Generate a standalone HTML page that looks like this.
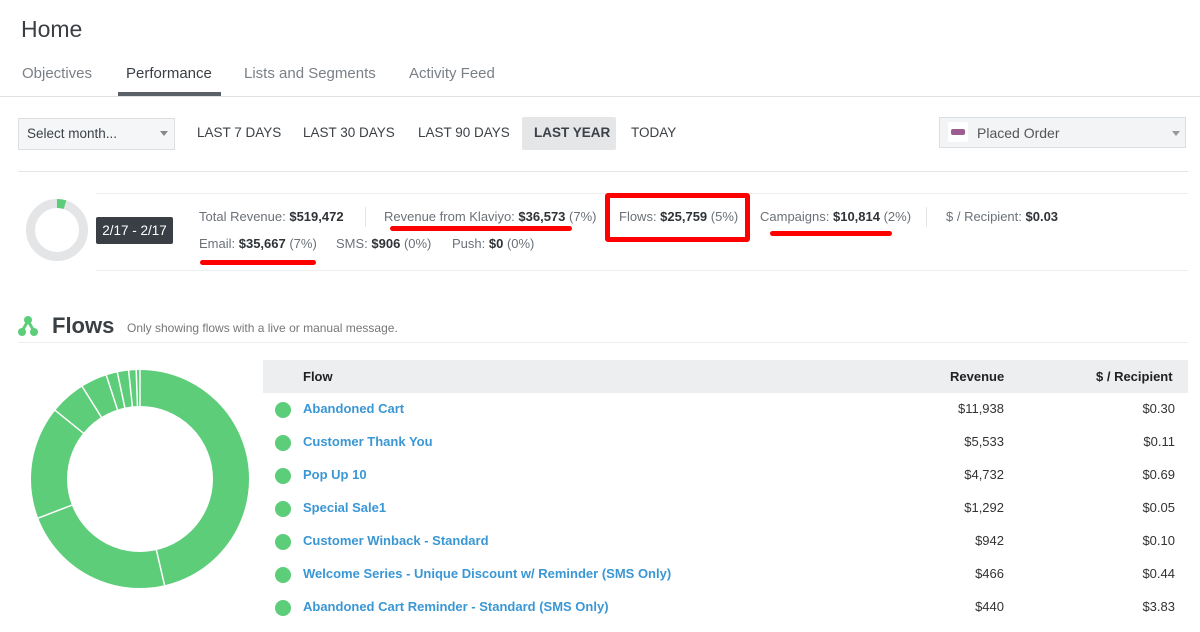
<!DOCTYPE html>
<html><head><meta charset="utf-8"><style>
*{margin:0;padding:0;box-sizing:border-box}
body{width:1200px;height:632px;overflow:hidden;background:#fff;font-family:"Liberation Sans",sans-serif;color:#333;position:relative}
.a{position:absolute;white-space:nowrap}
.tab{font-size:15px;color:#7a8087;top:65px}
.btn{font-size:13.5px;color:#3c4147;top:125px}
.m{font-size:13px;color:#6b7178}
.m b{color:#2f3337}
.red{position:absolute;background:#f00;border-radius:3px;height:5px}
.row{position:absolute;left:263px;width:925px;height:33px}
.row .d{position:absolute;left:12px;top:9px;width:16px;height:16px;border-radius:50%;background:#5ccd78}
.row .n{position:absolute;left:40px;top:8px;font-size:13px;font-weight:bold;color:#3a97d4}
.row .r{position:absolute;right:184px;top:8px;font-size:13px;color:#333}
.row .p{position:absolute;right:13px;top:8px;font-size:13px;color:#333}
</style></head><body>
<div class="a" style="left:21px;top:16px;font-size:23px;color:#3a3f44">Home</div>
<div class="a tab" style="left:22px">Objectives</div>
<div class="a tab" style="left:126px;color:#3a3f44">Performance</div>
<div class="a tab" style="left:244px">Lists and Segments</div>
<div class="a tab" style="left:409px">Activity Feed</div>
<div class="a" style="left:0;top:96px;width:1200px;height:1px;background:#dfe1e3"></div>
<div class="a" style="left:118px;top:92px;width:103px;height:4px;background:#5a6169"></div>

<div class="a" style="left:18px;top:118px;width:157px;height:32px;border:1px solid #dcdfe2;background:#f5f6f7"></div>
<div class="a" style="left:27px;top:126px;font-size:13.5px;color:#3c4147">Select month...</div>
<div class="a" style="left:160px;top:131px;border:4px solid transparent;border-top:5px solid #888"></div>
<div class="a btn" style="left:197px">LAST 7 DAYS</div>
<div class="a btn" style="left:303px">LAST 30 DAYS</div>
<div class="a btn" style="left:418px">LAST 90 DAYS</div>
<div class="a" style="left:522px;top:117px;width:94px;height:33px;background:#e4e6e8;border-radius:2px"></div>
<div class="a btn" style="left:534px;font-weight:bold;color:#3c4147">LAST YEAR</div>
<div class="a btn" style="left:631px">TODAY</div>

<div class="a" style="left:939px;top:117px;width:247px;height:31px;border:1px solid #dcdfe2;background:#f2f4f5"></div>
<div class="a" style="left:948px;top:122px;width:20px;height:20px;background:#fff;border-radius:2px"></div>
<div class="a" style="left:951px;top:129px;width:14px;height:6px;background:#9b5c8f;border-radius:2px"></div>
<div class="a" style="left:977px;top:125px;font-size:14px;color:#555">Placed Order</div>
<div class="a" style="left:1172px;top:131px;border:4px solid transparent;border-top:5px solid #999"></div>

<div class="a" style="left:18px;top:171px;width:1170px;height:1px;background:#e3e5e7"></div>
<div class="a" style="left:96px;top:193px;width:1092px;height:1px;background:#eceef0"></div>
<div class="a" style="left:96px;top:270px;width:1092px;height:1px;background:#eceef0"></div>

<svg class="a" style="left:24px;top:197px" width="66" height="66" viewBox="0 0 66 66">
<circle cx="33" cy="33" r="26.5" fill="none" stroke="#e3e5e7" stroke-width="9"/>
<path d="M33 6.5 A26.5 26.5 0 0 1 41 7.7" fill="none" stroke="#5ccd78" stroke-width="9"/>
</svg>
<div class="a" style="left:96px;top:217px;width:77px;height:27px;background:#3a3f45;border-radius:2px;color:#fff;font-size:13.5px;text-align:center;line-height:27px">2/17 - 2/17</div>

<div class="a m" style="left:199px;top:209px">Total Revenue: <b>$519,472</b></div>
<div class="a" style="left:365px;top:207px;width:1px;height:20px;background:#e3e5e7"></div>
<div class="a m" style="left:384px;top:209px">Revenue from Klaviyo: <b>$36,573</b> (7%)</div>
<div class="a m" style="left:619px;top:209px">Flows: <b>$25,759</b> (5%)</div>
<div class="a m" style="left:760px;top:209px">Campaigns: <b>$10,814</b> (2%)</div>
<div class="a" style="left:926px;top:207px;width:1px;height:20px;background:#e3e5e7"></div>
<div class="a m" style="left:946px;top:209px">$ / Recipient: <b>$0.03</b></div>
<div class="a m" style="left:199px;top:236px">Email: <b>$35,667</b> (7%)</div>
<div class="a m" style="left:336px;top:236px">SMS: <b>$906</b> (0%)</div>
<div class="a m" style="left:452px;top:236px">Push: <b>$0</b> (0%)</div>

<div class="red" style="left:390px;top:226px;width:182px"></div>
<div class="red" style="left:770px;top:231px;width:122px"></div>
<div class="red" style="left:200px;top:260px;width:116px"></div>
<div class="a" style="left:605px;top:193px;width:145px;height:49px;border:5px solid #f00;border-radius:3px"></div>

<svg class="a" style="left:17px;top:315px" width="22" height="22" viewBox="0 0 22 22">
<g stroke="#5ccd78" stroke-width="3" fill="#5ccd78"><line x1="11" y1="6" x2="5" y2="16"/><line x1="11" y1="6" x2="17" y2="16"/></g>
<circle cx="11" cy="5" r="4" fill="#5ccd78"/><circle cx="5" cy="17" r="4" fill="#5ccd78"/><circle cx="17" cy="17" r="4" fill="#5ccd78"/>
</svg>
<div class="a" style="left:52px;top:313px;font-size:22px;font-weight:bold;color:#3a3f44">Flows</div>
<div class="a" style="left:127px;top:321px;font-size:12px;color:#777">Only showing flows with a live or manual message.</div>
<div class="a" style="left:18px;top:342px;width:1170px;height:1px;background:#eceef0"></div>

<svg class="a" style="left:0;top:340px" width="280" height="280" viewBox="0 340 280 280">
<circle cx="140" cy="479" r="91" fill="none" stroke="#5ecd7a" stroke-width="36"/>
<g stroke="#fff" stroke-width="1.5" transform="translate(140 479)">
<line x1="0" y1="-72" x2="0" y2="-110" transform="rotate(167)"/>
<line x1="0" y1="-72" x2="0" y2="-110" transform="rotate(249)"/>
<line x1="0" y1="-72" x2="0" y2="-110" transform="rotate(309)"/>
<line x1="0" y1="-72" x2="0" y2="-110" transform="rotate(328)"/>
<line x1="0" y1="-72" x2="0" y2="-110" transform="rotate(342)"/>
<line x1="0" y1="-72" x2="0" y2="-110" transform="rotate(348)"/>
<line x1="0" y1="-72" x2="0" y2="-110" transform="rotate(354)"/>
<line x1="0" y1="-72" x2="0" y2="-110" transform="rotate(358)"/>
<line x1="0" y1="-72" x2="0" y2="-110" transform="rotate(0)"/>
</g>
</svg>

<div class="a" style="left:263px;top:360px;width:925px;height:33px;background:#eceef0"></div>
<div class="a" style="left:303px;top:369px;font-size:13px;font-weight:bold;color:#222">Flow</div>
<div class="a" style="left:950px;top:369px;font-size:13px;font-weight:bold;color:#222">Revenue</div>
<div class="a" style="left:1096px;top:369px;font-size:13px;font-weight:bold;color:#222">$ / Recipient</div>

<div class="row" style="top:393px"><div class="d"></div><div class="n">Abandoned Cart</div><div class="r">$11,938</div><div class="p">$0.30</div></div>
<div class="row" style="top:426px"><div class="d"></div><div class="n">Customer Thank You</div><div class="r">$5,533</div><div class="p">$0.11</div></div>
<div class="row" style="top:459px"><div class="d"></div><div class="n">Pop Up 10</div><div class="r">$4,732</div><div class="p">$0.69</div></div>
<div class="row" style="top:492px"><div class="d"></div><div class="n">Special Sale1</div><div class="r">$1,292</div><div class="p">$0.05</div></div>
<div class="row" style="top:525px"><div class="d"></div><div class="n">Customer Winback - Standard</div><div class="r">$942</div><div class="p">$0.10</div></div>
<div class="row" style="top:558px"><div class="d"></div><div class="n">Welcome Series - Unique Discount w/ Reminder (SMS Only)</div><div class="r">$466</div><div class="p">$0.44</div></div>
<div class="row" style="top:591px"><div class="d"></div><div class="n">Abandoned Cart Reminder - Standard (SMS Only)</div><div class="r">$440</div><div class="p">$3.83</div></div>
</body></html>
